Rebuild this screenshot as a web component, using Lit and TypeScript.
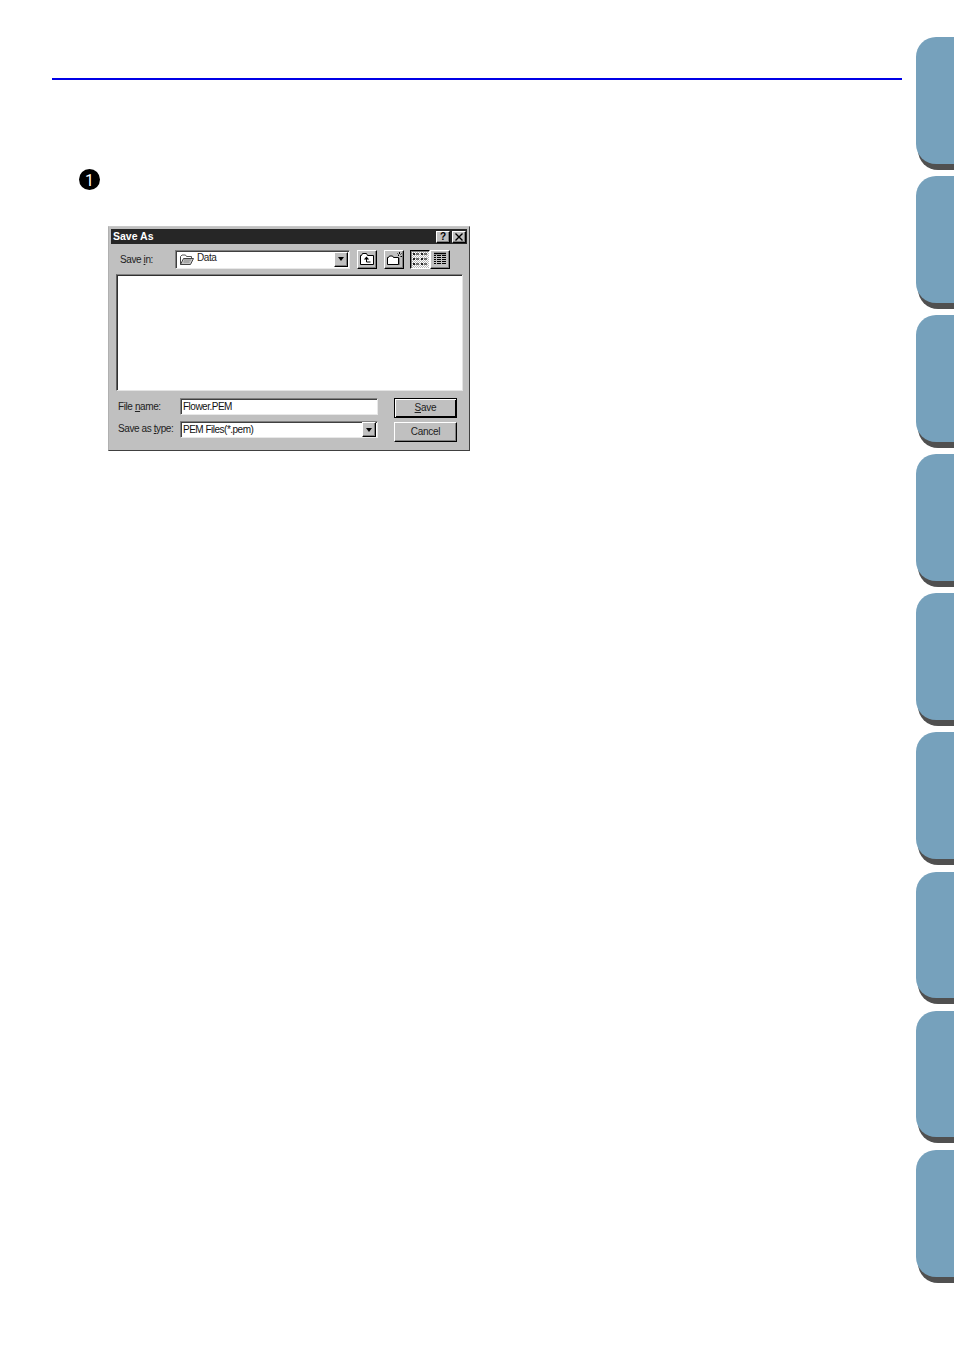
import { LitElement, html, css, svg } from "lit";
import { customElement } from "lit/decorators.js";

const raised = css`
  border-style: solid;
  border-width: 1px;
  border-color: #fff #000 #000 #fff;
  box-shadow: inset -1px -1px 0 #808080;
`;

@customElement("app-root")
export class AppRoot extends LitElement {
  static styles = css`
    :host {
      display: block;
      width: 954px;
      height: 1348px;
      overflow: hidden;
      background: #fff;
      font-family: "Liberation Sans", Arial, sans-serif;
    }
    .page { display: flex; height: 1348px; }
    .main { width: 850px; margin-left: 52px; flex: none; }
    .rule { height: 2px; background: #0000e6; margin-top: 78px; }
    .step { margin: 89px 0 0 27px; display: block; width: 21px; height: 22px; }
    .step text { font-family: Roboto, Arial, sans-serif; font-size: 16px; fill: #fff; }
    .tabs {
      margin-left: 14px; padding-top: 37px; width: 38px; flex: none;
      display: flex; flex-direction: column; gap: 12.35px;
    }
    .tab {
      height: 126.75px;
      background: #76a1bc;
      border-radius: 20px 0 0 20px;
      box-shadow: 2px 6px 0 0 #505050;
      clip-path: inset(-1px 0 -7px 0);
    }
    .dialog {
      margin: 35px 0 0 56px;
      width: 362px; height: 225px;
      box-sizing: border-box;
      background: #c0c0c0;
      border: 1px solid #808080;
      border-top-color: #c8c8c8;
      border-left-color: #b0b0b0;
      border-bottom-color: #404040;
      border-right-color: #404040;
      padding: 2px 2px 0;
      font-size: 10px;
      color: #000;
      display: flex; flex-direction: column;
    }
    .title {
      height: 15px; flex: none;
      background: #262626; color: #fff;
      font-weight: 700; font-size: 10.5px;
      display: flex; align-items: center;
      padding: 0 1px 0 2px;
    }
    .title .t { flex: 1; margin-top: -2px; }
    .cap {
      width: 14px; height: 12px; margin-left: 2px;
      box-sizing: border-box;
      background: #c0c0c0;
      ${raised}
      color: #000; display: flex; align-items: center; justify-content: center;
      font-size: 10px; font-weight: 700;
      line-height: 1;
    }
    .toolbar { display: flex; align-items: center; height: 24px; margin-top: 3px; flex: none; }
    .lab { color: #222; letter-spacing: -.4px; white-space: nowrap; }
    .savein { width: 64px; padding-left: 9px; box-sizing: border-box; }
    .combo {
      background: #fff;
      box-sizing: border-box;
      border: 1px solid;
      border-color: #808080 #e8e8e8 #e8e8e8 #808080;
      display: flex; align-items: center;
      box-shadow: inset 1px 1px 0 #404040;
    }
    .combo.look { width: 175px; height: 19px; padding-left: 4px; gap: 3px; }
    .data { margin-top: -3px; }
    .arrow {
      margin-left: auto; width: 14px; height: 15px; margin-right: 1px; flex: none;
      box-sizing: border-box; background: #c0c0c0;
      ${raised}
      display: flex; align-items: center; justify-content: center;
    }
    .arrow i {
      display: block; width: 0; height: 0;
      border-left: 3.5px solid transparent; border-right: 3.5px solid transparent;
      border-top: 4px solid #000;
    }
    .tb {
      width: 20px; height: 19px; box-sizing: border-box; flex: none;
      border: 1px solid; border-color: #fff #000 #000 #fff;
      box-shadow: inset -1px -1px 0 #808080;
      display: flex; align-items: center; justify-content: center;
      background: #c0c0c0;
    }
    .tb.on {
      border-color: #000 #fff #fff #000;
      box-shadow: inset 1px 1px 0 #808080;
      background-color: #eee;
      background-image: repeating-conic-gradient(#b8b8b8 0 25%, #fff 0 50%);
      background-size: 2px 2px;
    }
    .up { margin-left: 7px; }
    .new { margin-left: 7px; }
    .view1 { margin-left: 6px; }
    .list {
      margin: 3px 4px 0 5px;
      height: 117px; flex: none;
      box-sizing: border-box;
      background: #fff;
      border: 1px solid;
      border-color: #808080 #e4e4e4 #e4e4e4 #606060;
      box-shadow: inset 1px 1px 0 #303030;
    }
    .bottom {
      display: grid;
      grid-template-columns: 62px 198px 1fr;
      grid-template-rows: 24px 24px;
      margin: 7px 0 0 7px;
      align-items: start;
    }
    .lab2 { line-height: 16px; padding-top: 1px; }
    .lab3 { margin-top: -2px; }
    .field {
      width: 198px; height: 17px; padding-left: 2px;
      letter-spacing: -.5px; color: #111;
    }
    .field2 { margin-top: -1px; }
    .btn {
      justify-self: start;
      margin-left: 16px;
      width: 63px; height: 20px;
      box-sizing: border-box;
      background: #c0c0c0;
      border: 1px solid; border-color: #fff #000 #000 #fff;
      box-shadow: inset -1px -1px 0 #808080;
      display: flex; align-items: center; justify-content: center;
      color: #222; letter-spacing: -.25px;
    }
    .btn span { margin-top: -1px; }
    .btn.def { border-color: #000; box-shadow: inset 1px 1px 0 #fff, inset -1px -1px 0 #000; }
    u { text-decoration: underline; text-underline-offset: 1px; }
    svg { display: block; }
  `;

  private folder() {
    return html`<svg width="14" height="11" viewBox="0 0 14 11" fill="none">
      <path d="M.5 2.500 2 1h3.500l1 1.500h5v2" fill="#fff" stroke="#555"/>
      <path d="M.5 2.500v8h10l3-6H3.500l-3 6" fill="#c8c8c8" stroke="#444"/>
      <path d="M4 6h7M3.500 8h6" stroke="#888"/>
    </svg>`;
  }

  private upIcon() {
    return html`<svg width="14" height="12" viewBox="0 0 14 12" fill="none">
      <path d="M.5 11.500v-9h1l1-2h4l1 2h6v9z" fill="#fff" stroke="#000"/>
      <path d="M6.500 6v3h4" stroke="#000"/>
      <path d="M6.500 3.500 3.800 6.500h5.400z" fill="#000"/>
    </svg>`;
  }

  private newIcon() {
    return html`<svg width="15" height="14" viewBox="0 0 15 14" fill="none">
      <path d="M.5 12.500v-7h1l1-1.500h3l1 1.500h5v7z" fill="#fff" stroke="#000"/>
      <path d="M12.500 6v7" stroke="#808080"/>
      <path d="M12.500 0v2M14.500 1.500l-1 1M10.500 1.500l1 1M13.500 4.500h1.500M11.500 3v1" stroke="#000"/>
    </svg>`;
  }

  private listIcon() {
    const rows = [1, 6, 11];
    return html`<svg width="15" height="14" viewBox="0 0 15 14">
      ${rows.map(
        (y) => svg`
          <rect x="0" y="${y}" width="2" height="2" fill="#222"/>
          <rect x="8" y="${y}" width="2" height="2" fill="#222"/>
          <path d="M3 ${y + 1}h3M11 ${y + 1}h3" stroke="#000" stroke-width="1.200"/>
        `
      )}
    </svg>`;
  }

  private detailIcon() {
    const rows = [3, 5, 7, 9, 11];
    return html`<svg width="14" height="14" viewBox="0 0 14 14">
      <path d="M1 1.500h12" stroke="#000" stroke-width="1.500"/>
      ${rows.map((y) => svg`<path d="M1 ${y + 0.5}h2M4 ${y + 0.5}h4M9 ${y + 0.5}h4" stroke="#000"/>`)}
    </svg>`;
  }

  render() {
    return html`<div class="page">
      <div class="main">
        <div class="rule"></div>
        <svg class="step" viewBox="0 0 21 22">
          <circle cx="10.500" cy="10.500" r="10.500" fill="#000"/>
          <text x="10.500" y="16.500" text-anchor="middle">1</text>
        </svg>
        <div class="dialog">
          <div class="title">
            <span class="t">Save As</span>
            <span class="cap">?</span>
            <span class="cap">
              <svg width="8" height="8" viewBox="0 0 8 8"><path d="M.5.5l7 7M7.500.5l-7 7" stroke="#000" stroke-width="1.400"/></svg>
            </span>
          </div>
          <div class="toolbar">
            <span class="lab savein">Save <u>i</u>n:</span>
            <div class="combo look">
              ${this.folder()}<span class="lab data">Data</span>
              <span class="arrow"><i></i></span>
            </div>
            <span class="tb up">${this.upIcon()}</span>
            <span class="tb new">${this.newIcon()}</span>
            <span class="tb on view1">${this.listIcon()}</span>
            <span class="tb">${this.detailIcon()}</span>
          </div>
          <div class="list"></div>
          <div class="bottom">
            <span class="lab lab2">File <u>n</u>ame:</span>
            <div class="combo field"><span>Flower.PEM</span></div>
            <span class="btn def"><span><u>S</u>ave</span></span>
            <span class="lab lab2 lab3">Save as <u>t</u>ype:</span>
            <div class="combo field field2"><span>PEM Files(*.pem)</span><span class="arrow"><i></i></span></div>
            <span class="btn"><span>Cancel</span></span>
          </div>
        </div>
      </div>
      <div class="tabs">
        ${Array.from({ length: 9 }, () => html`<div class="tab"></div>`)}
      </div>
    </div>`;
  }
}
